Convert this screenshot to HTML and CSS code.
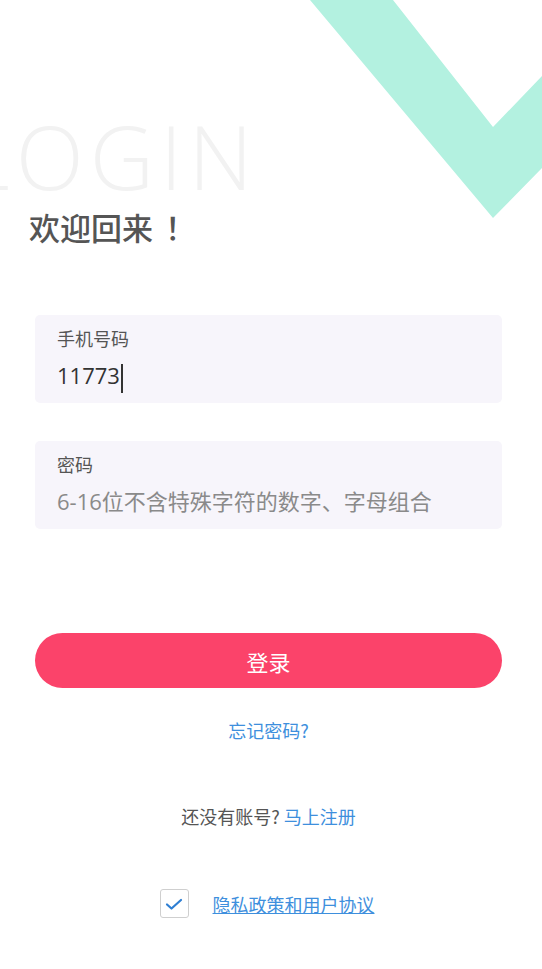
FILE: index.html
```html
<!DOCTYPE html>
<html lang="zh-CN">
<head>
<meta charset="utf-8">
<title>登录</title>
<link rel="stylesheet" href="styles.css">
</head>
<body>
<div class="page">
  <svg class="deco" width="232" height="218" viewBox="0 0 232 218" aria-hidden="true">
    <polygon points="0,0 83,0 183,127 232,76 232,168 183,218" fill="#b3f1e0"/>
  </svg>
  <div class="watermark">LOGIN</div>
  <main class="content">
    <h1 class="title">欢迎回来<span class="punct">！</span></h1>
    <div class="fields">
      <div class="field">
        <div class="label">手机号码</div>
        <div class="value">11773<span class="caret"></span></div>
      </div>
      <div class="field">
        <div class="label">密码</div>
        <div class="value placeholder">6-16位不含特殊字符的数字、字母组合</div>
      </div>
    </div>
    <button class="login-btn">登录</button>
    <a class="forgot">忘记密码?</a>
    <p class="register">还没有账号? <a class="link">马上注册</a></p>
    <div class="agree">
      <span class="checkbox">
        <svg width="18" height="14" viewBox="0 0 18 14"><path d="M2 7.5 L6.5 11.5 L16 3" fill="none" stroke="#2f7fd3" stroke-width="2.2" stroke-linecap="round" stroke-linejoin="round"/></svg>
      </span>
      <a class="policy">隐私政策和用户协议</a>
    </div>
  </main>
</div>
</body>
</html>
```
FILE: styles.css
```css
* { box-sizing: border-box; }
html, body { margin: 0; padding: 0; background: #fff; }
body {
  font-family: "Open Sans", "Noto Sans CJK SC", sans-serif;
  color: #555;
}
.page {
  position: relative;
  width: 542px;
  min-height: 969px;
  overflow: hidden;
}
.deco {
  position: absolute;
  top: 0;
  right: 0;
  display: block;
}
.watermark {
  position: absolute;
  left: -36px;
  top: 121px;
  font-family: "Open Sans", sans-serif;
  font-weight: 300;
  font-size: 89px;
  line-height: 70px;
  letter-spacing: 6px;
  color: #f2f2f2;
  white-space: nowrap;
}
.content {
  position: relative;
  display: flex;
  flex-direction: column;
  padding: 207px 40px 0 35px;
}
.title {
  margin: 0 0 0 -6px;
  font-size: 31px;
  line-height: 40px;
  font-weight: 500;
  color: #555;
  font-family: "Noto Sans CJK SC", sans-serif;
}
.punct {
  padding-left: 12px;
}
.fields {
  display: flex;
  flex-direction: column;
  gap: 38px;
  margin-top: 68px;
}
.field {
  height: 88px;
  background: #f7f5fb;
  border-radius: 5px;
  padding: 12px 22px 0;
}
.label {
  font-size: 18px;
  line-height: 24px;
  color: #555;
}
.value {
  margin-top: 8px;
  font-size: 22px;
  line-height: 32px;
  color: #333;
  white-space: nowrap;
}
.value.placeholder { color: #8a8a8a; }
.caret {
  display: inline-block;
  width: 2px;
  height: 29px;
  background: #333;
  vertical-align: middle;
  margin-left: 1px;
}
.login-btn {
  margin-top: 104px;
  height: 55px;
  border: none;
  border-radius: 28px;
  background: #fb436a;
  color: #fff;
  font-family: "Noto Sans CJK SC", sans-serif;
  font-size: 22px;
  padding: 0;
}
.forgot {
  align-self: center;
  margin-top: 30px;
  font-family: "Noto Sans CJK SC", sans-serif;
  font-size: 18px;
  line-height: 24px;
  color: #3e8fdd;
}
.register {
  align-self: center;
  margin: 62px 0 0;
  font-family: "Noto Sans CJK SC", sans-serif;
  font-size: 18px;
  line-height: 24px;
  color: #555;
}
.link { color: #3e8fdd; }
.agree {
  align-self: center;
  display: flex;
  align-items: center;
  gap: 24px;
  margin-top: 61px;
  margin-left: -3px;
}
.checkbox {
  width: 29px;
  height: 29px;
  border: 1px solid #cfcfcf;
  border-radius: 3px;
  display: flex;
  align-items: center;
  justify-content: center;
  background: #fff;
}
.policy {
  font-family: "Noto Sans CJK SC", sans-serif;
  font-size: 18px;
  line-height: 24px;
  color: #3e8fdd;
  text-decoration: underline;
}
```
